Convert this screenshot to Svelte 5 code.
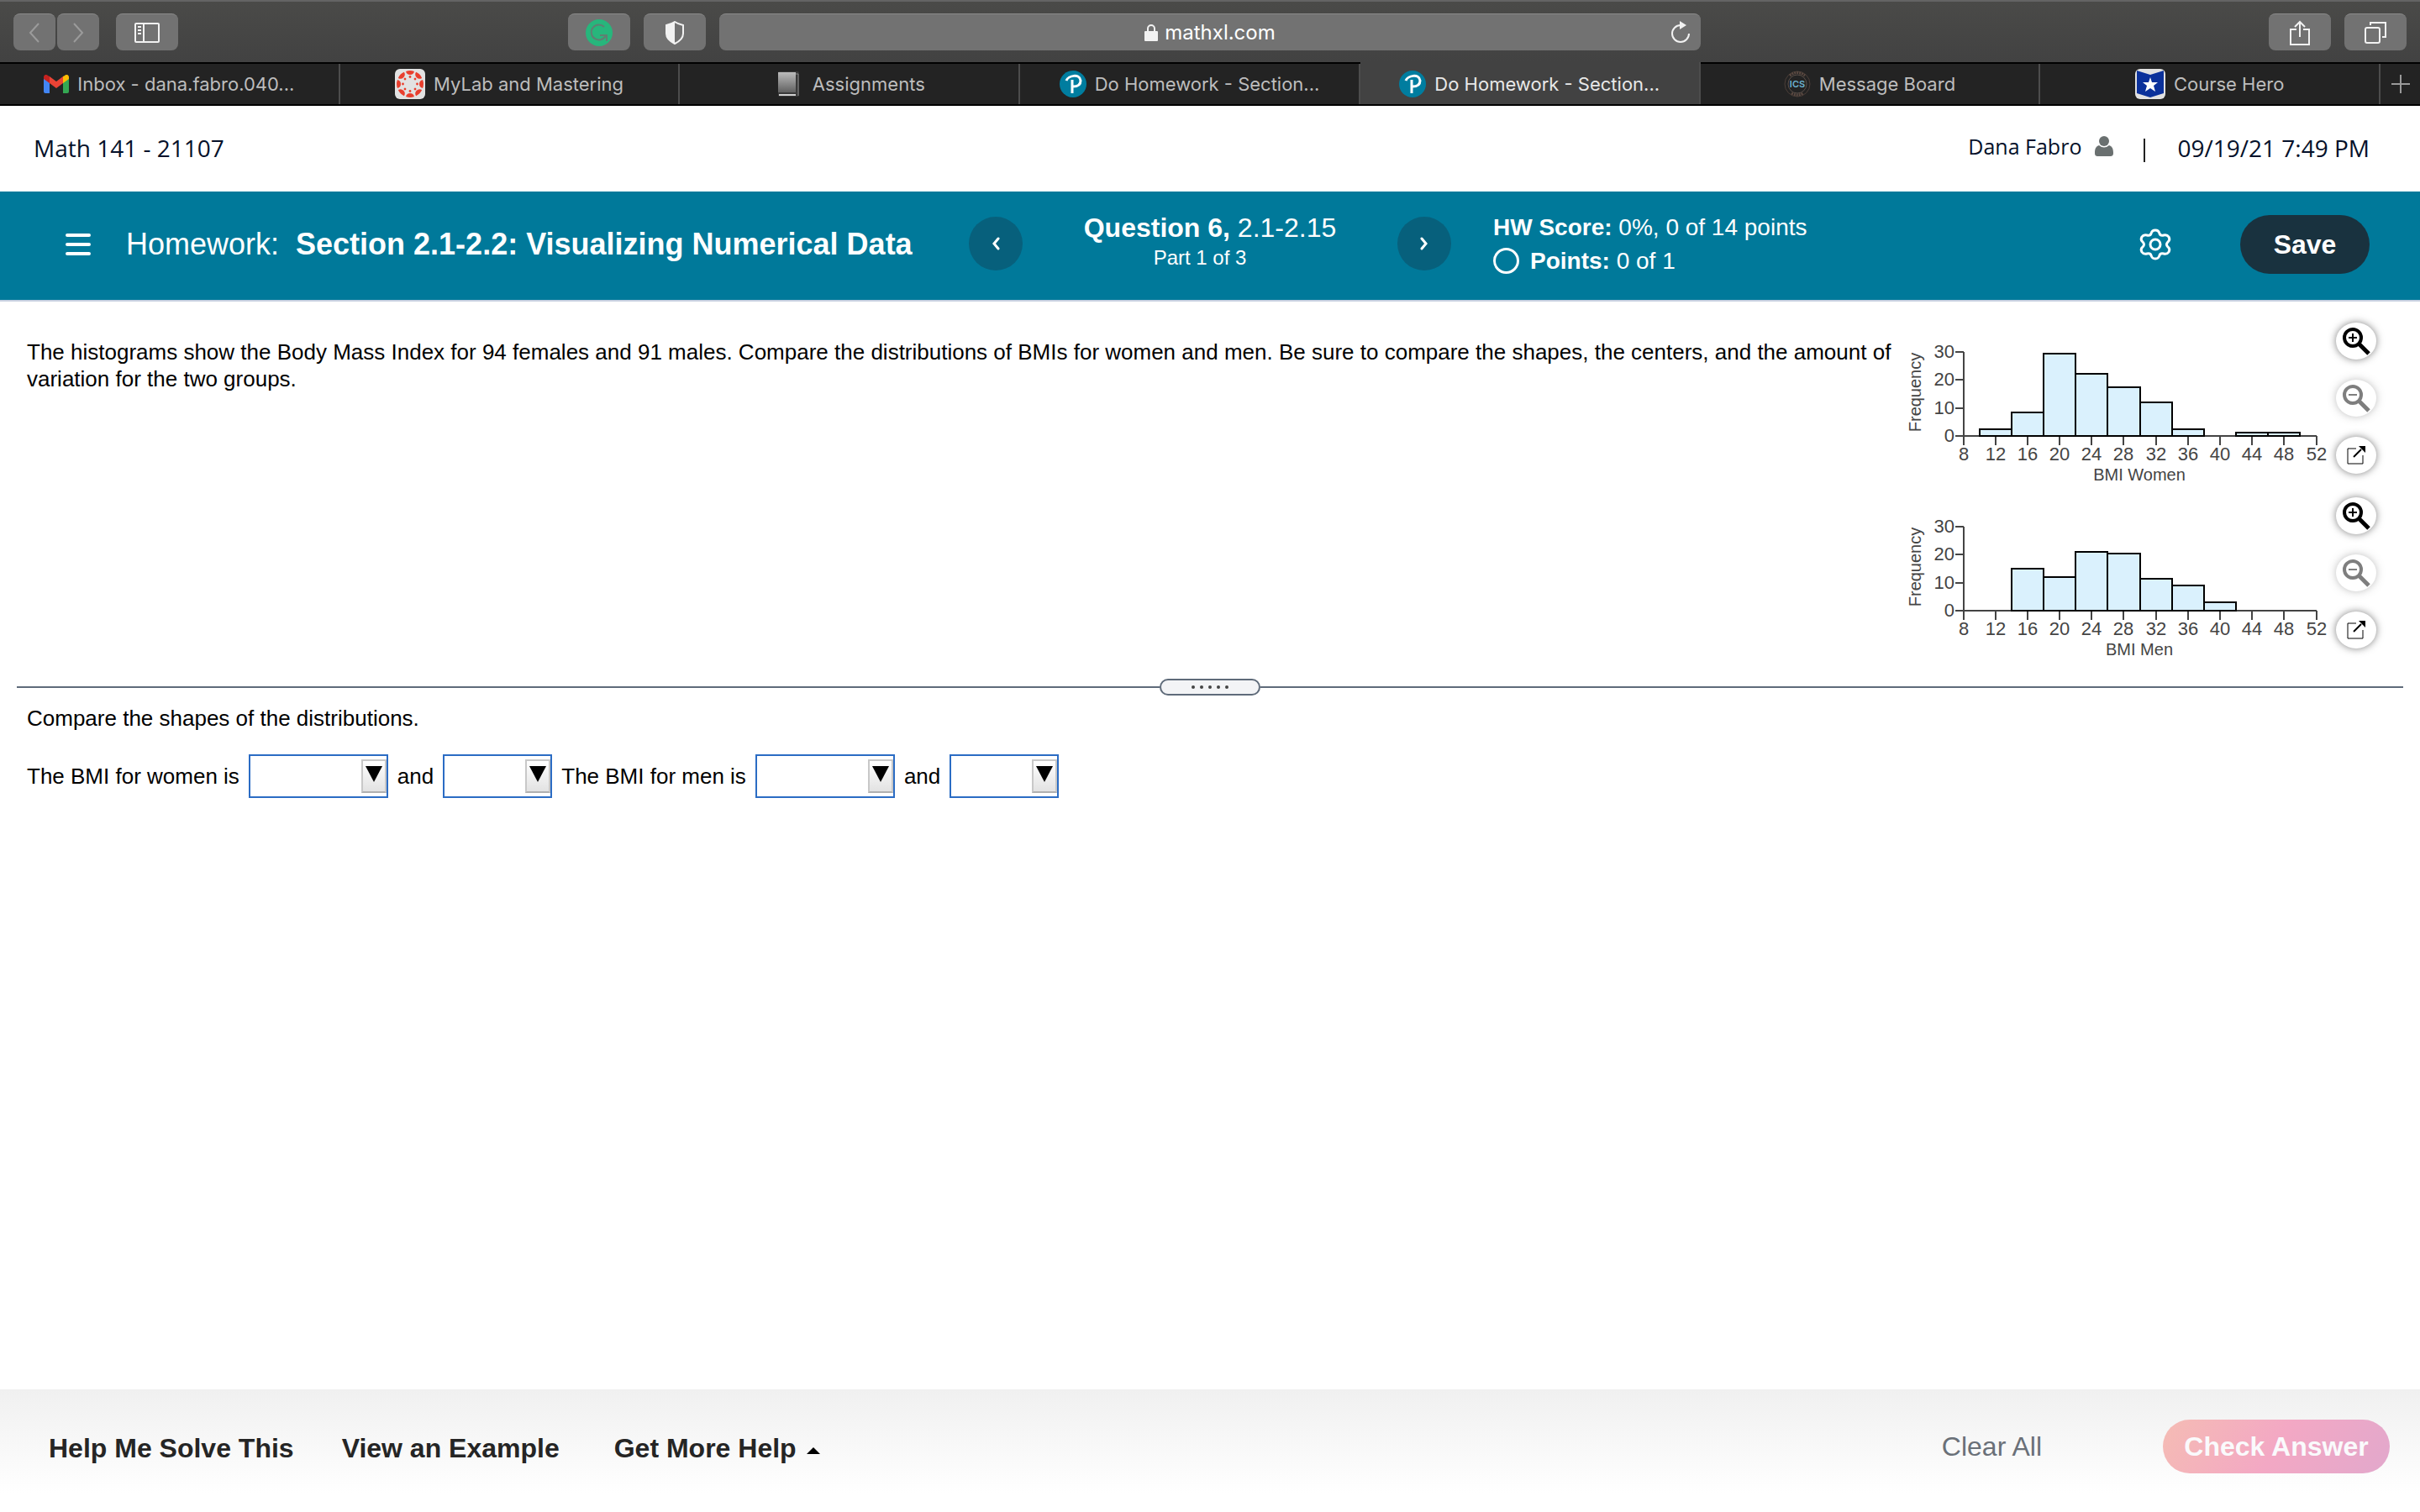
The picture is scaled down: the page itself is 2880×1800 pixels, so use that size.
<script>
  const tabs = [
    { icon: "gmail", title: "Inbox - dana.fabro.040..." },
    { icon: "canvas", title: "MyLab and Mastering" },
    { icon: "book", title: "Assignments" },
    { icon: "pearson", title: "Do Homework - Section..." },
    { icon: "pearson", title: "Do Homework - Section...", active: true },
    { icon: "ics", title: "Message Board" },
    { icon: "hero", title: "Course Hero" },
  ];

  // each bar is 4 BMI units wide
  const charts = [
    {
      label: "BMI Women",
      start: 10,
      bars: [2.4, 8.4, 29.4, 22.2, 17.4, 12, 2.4, 0, 1.2, 1.2],
    },
    {
      label: "BMI Men",
      start: 14,
      bars: [15, 12, 21, 20.4, 11.4, 9, 3],
    },
  ];

  const xTicks = [8, 12, 16, 20, 24, 28, 32, 36, 40, 44, 48, 52];
  const yTicks = [0, 10, 20, 30];

  const toX = (bmi) => Math.floor(71 + ((bmi - 8) * 420) / 44);
  const toY = (freq) => Math.round(119 - (freq * 10) / 3);

  const spokes = [0, 45, 90, 135, 180, 225, 270, 315];

  const shapes = ["", "skewed right", "skewed left", "symmetric"];
  const modes = ["", "unimodal", "bimodal"];

  let answers = {
    womenShape: "",
    womenMode: "",
    menShape: "",
    menMode: "",
  };

  const clearAll = () => {
    answers = { womenShape: "", womenMode: "", menShape: "", menMode: "" };
  };
</script>

<div class="window">
  <div class="toolbar">
    <div class="tools">
      <div class="history">
        <button class="tool narrow" aria-label="Back">
          <svg width="16" height="28" viewBox="0 0 16 28"><path d="M13 3 3 14l10 11" fill="none" stroke="#9b9b9b" stroke-width="2" /></svg>
        </button>
        <button class="tool narrow" aria-label="Forward">
          <svg width="16" height="28" viewBox="0 0 16 28"><path d="m3 3 10 11L3 25" fill="none" stroke="#9b9b9b" stroke-width="2" /></svg>
        </button>
      </div>
      <button class="tool" aria-label="Sidebar">
        <svg width="30" height="24" viewBox="0 0 30 24" fill="none" stroke="#f2f2f2" stroke-width="2">
          <rect x="1" y="1" width="28" height="22" rx="1" />
          <path d="M11 1v22M4 5h4M4 9h4M4 13h4" />
        </svg>
      </button>
      <button class="tool first-extension" aria-label="Grammarly">
        <svg width="32" height="32" viewBox="0 0 32 32">
          <circle cx="16" cy="16" r="16" fill="#27b67c" />
          <path d="M22 9a9 9 0 1 0 2 10M17 19h8v7" fill="none" stroke="#5f7f72" stroke-width="2" />
        </svg>
      </button>
      <button class="tool" aria-label="Privacy report">
        <svg width="24" height="28" viewBox="0 0 24 28">
          <path d="M12 1c3 2 6 3 10 4v10c0 5-4 9-10 12C6 24 2 20 2 15V5c4-1 7-2 10-4z" fill="none" stroke="#f2f2f2" stroke-width="2" />
          <path d="M12 1v26C6 24 2 20 2 15V5c4-1 7-2 10-4z" fill="#f2f2f2" />
        </svg>
      </button>
    </div>
    <div class="address">
      <span class="site">
        <svg width="16" height="22" viewBox="0 0 16 22">
          <path d="M4 10V6a4 4 0 0 1 8 0v4" fill="none" stroke="#f2f2f2" stroke-width="2" />
          <rect y="9" width="16" height="12" rx="1" fill="#f2f2f2" />
        </svg>
        mathxl.com
      </span>
      <button class="reload" aria-label="Reload">
        <svg width="24" height="28" viewBox="0 0 24 28">
          <path d="M12 5a10 10 0 1 0 10 10" fill="none" stroke="#f2f2f2" stroke-width="2" />
          <path d="M11 0v10l8-5z" fill="#f2f2f2" />
        </svg>
      </button>
    </div>
    <div class="tools end">
      <button class="tool" aria-label="Share">
        <svg width="24" height="30" viewBox="0 0 24 30" fill="none" stroke="#f2f2f2" stroke-width="2">
          <path d="M8 11H1v18h22V11h-7M12 20V2M6 8l6-6 6 6" />
        </svg>
      </button>
      <button class="tool" aria-label="Show tabs">
        <svg width="26" height="26" viewBox="0 0 26 26" fill="none" stroke="#f2f2f2" stroke-width="2">
          <rect x="1" y="7" width="17" height="18" rx="2" />
          <path d="M7 4V1h18v17h-4" />
        </svg>
      </button>
    </div>
  </div>

  <nav class="tabs">
    {#each tabs as tab}
      <a href="#tab" class="tab" class:active={tab.active}>
        {#if tab.icon === "gmail"}
          <svg width="30" height="22" viewBox="0 0 30 22">
            <path d="M0 3v17q0 2 2 2h5V8z" fill="#4285f4" />
            <path d="M30 3v17q0 2-2 2h-5V8z" fill="#34a853" />
            <path d="M7 2v8l8 6 8-6V2l-8 6z" fill="#ea4335" />
            <path d="M0 3c0-3 3-4 5-2l2 1v8L0 5z" fill="#c5221f" />
            <path d="M30 3c0-3-3-4-5-2l-2 1v8l7-5z" fill="#fbbc04" />
          </svg>
        {:else if tab.icon === "canvas"}
          <svg width="36" height="36" viewBox="0 0 36 36">
            <rect width="36" height="36" rx="6" fill="#e2e2e2" />
            {#each spokes as angle}
              <g transform="rotate({angle} 18 18)" fill="#e93e2d">
                <path d="M13 3q5-2 10 0-1 4-5 4t-5-4z" />
                <circle cx="18" cy="9.5" r="1.4" />
              </g>
            {/each}
          </svg>
        {:else if tab.icon === "book"}
          <svg width="36" height="32" viewBox="-4 0 36 32">
            <defs>
              <linearGradient id="cover" x2="0" y2="1">
                <stop offset="0" stop-color="#bcbcbc" />
                <stop offset="1" stop-color="#606060" />
              </linearGradient>
            </defs>
            <rect x="1" y="1" width="25" height="30" rx="2" fill="#3a3a3a" />
            <rect x="1" y="2" width="21" height="24" fill="url(#cover)" />
            <path d="M2 29h20" stroke="#d0d0d0" stroke-width="2" />
            <path d="M22 4h3v26" fill="none" stroke="#8a8a8a" />
          </svg>
        {:else if tab.icon === "pearson"}
          <svg width="32" height="32" viewBox="0 0 32 32">
            <circle cx="16" cy="16" r="16" fill="#007d9f" />
            <path d="M8 12c2-6 16-9 17 0 0 6-5 7-9 7M15 11v16" fill="none" stroke="#fff" stroke-width="3" />
          </svg>
        {:else if tab.icon === "ics"}
          <svg width="32" height="32" viewBox="0 0 32 32">
            <circle cx="16" cy="16" r="15" fill="none" stroke="#4c3f39" />
            <path d="M7 6q9-7 18 0M9 27q7 4 14 0" fill="none" stroke="#5c4a42" stroke-width="3" stroke-dasharray="2 1" />
            <circle cx="16" cy="16" r="11" fill="none" stroke="#5a4f49" />
            <text x="16" y="20" text-anchor="middle" fill="#6db3d1">ICS</text>
          </svg>
        {:else}
          <svg width="36" height="36" viewBox="0 0 36 36">
            <rect width="36" height="36" rx="6" fill="#e2e2e2" />
            <path d="M2 2l16 5 16-5v27l-16 5-16-5z" fill="#0b319b" />
            <path d="m18 10 2 6h7l-5 4 2 7-6-4-6 4 2-7-5-4h7z" fill="#fff" />
          </svg>
        {/if}
        <span>{tab.title}</span>
      </a>
    {/each}
    <button class="new-tab" aria-label="New tab">
      <svg width="22" height="22" viewBox="0 0 22 22"><path d="M11 0v22M0 11h22" stroke="#9a9a9a" stroke-width="2" /></svg>
    </button>
  </nav>

  <header class="course">
    <span class="course-name">Math 141 - 21107</span>
    <span class="user">
      Dana Fabro
      <svg width="22" height="24" viewBox="0 0 22 24" fill="#6a7070">
        <circle cx="11" cy="6" r="6" />
        <path d="M0 20c0-6 2-8 5-9q6 5 12 0c3 1 5 3 5 9 0 3-1 4-4 4H4c-3 0-4-1-4-4z" />
      </svg>
    </span>
    <span class="rule"></span>
    <span class="date">09/19/21 7:49 PM</span>
  </header>

  <section class="banner">
    <div class="assignment">
      <button class="menu" aria-label="Menu">
        <svg width="30" height="26" viewBox="0 0 30 26"><path d="M2 2h26M2 13h26M2 24h26" stroke="#fff" stroke-width="4" stroke-linecap="round" /></svg>
      </button>
      <h1><span>Homework:</span> Section 2.1-2.2: Visualizing Numerical Data</h1>
    </div>
    <div class="pager">
      <button class="step" aria-label="Previous question">
        <svg width="10" height="16" viewBox="0 0 10 16"><path d="M8 2 3 8l5 6" fill="none" stroke="#fff" stroke-width="3" stroke-linecap="round" /></svg>
      </button>
      <div class="question">
        <p><strong>Question 6,</strong> 2.1-2.15</p>
        <p class="part">Part 1 of 3</p>
      </div>
      <button class="step" aria-label="Next question">
        <svg width="10" height="16" viewBox="0 0 10 16"><path d="m2 2 5 6-5 6" fill="none" stroke="#fff" stroke-width="3" stroke-linecap="round" /></svg>
      </button>
    </div>
    <div class="status">
      <div class="score">
        <p><strong>HW Score:</strong> 0%, 0 of 14 points</p>
        <p class="points"><span class="ring"></span><span><strong>Points:</strong> 0 of 1</span></p>
      </div>
      <button class="gear" aria-label="Settings">
        <svg width="38" height="38" viewBox="0 0 38 38" fill="none" stroke="#fff" stroke-width="3" stroke-linejoin="round">
          <path d="M14 6q1-4 5-4t5 4q1 3 5 2 4-1 6 2 2 4-1 6-3 3 0 6 3 2 1 6-2 3-6 2-4-1-5 2-1 4-5 4t-5-4q-1-3-5-2-4 1-6-2-2-4 1-6 3-3 0-6-3-2-1-6 2-3 6-2 4 1 5-2z" />
          <circle cx="19" cy="19" r="6" />
        </svg>
      </button>
      <button class="save">Save</button>
    </div>
  </section>

  <main>
    <section class="problem">
      <p>
        The histograms show the Body Mass Index for 94 females and 91 males. Compare the distributions of BMIs for women
        and men. Be sure to compare the shapes, the centers, and the amount of variation for the two groups.
      </p>
      <div class="charts">
        {#each charts as chart}
          <div class="chart">
            <svg class="plot" width="510" height="190" viewBox="0 0 510 190" role="img" aria-label="{chart.label} histogram">
              <g class="axis">
                <path d="M71 19V119H491" />
                {#each yTicks as tick}
                  <path d="M61 {toY(tick)}H71" />
                {/each}
                {#each xTicks as tick}
                  <path d="M{toX(tick)} 119V130" />
                {/each}
              </g>
              {#each chart.bars as value, i}
                {#if value}
                  <rect
                    class="bar"
                    x={toX(chart.start + i * 4)}
                    y={toY(value)}
                    width={toX(chart.start + i * 4 + 4) - toX(chart.start + i * 4)}
                    height={119 - toY(value)}
                  />
                {/if}
              {/each}
              {#each yTicks as tick}
                <text class="tick" x="60" y={toY(tick) + 7} text-anchor="end">{tick}</text>
              {/each}
              {#each xTicks as tick}
                <text class="tick" x={toX(tick)} y="148" text-anchor="middle">{tick}</text>
              {/each}
              <text x="280" y="172" text-anchor="middle">{chart.label}</text>
              <text transform="translate(20 67) rotate(-90)" text-anchor="middle">Frequency</text>
            </svg>
            <div class="zoom">
              <button aria-label="Zoom in">
                <svg width="34" height="34" viewBox="0 0 34 34" fill="none" stroke="#000">
                  <circle cx="13" cy="13" r="10" stroke-width="4" />
                  <path d="M8 13h10M13 8v10" stroke-width="2" />
                  <path d="m21 21 11 11" stroke-width="5" />
                </svg>
              </button>
              <button aria-label="Zoom out" disabled>
                <svg width="34" height="34" viewBox="0 0 34 34" fill="none" stroke="#000">
                  <circle cx="13" cy="13" r="10" stroke-width="4" />
                  <path d="M8 13h10" stroke-width="2" />
                  <path d="m21 21 11 11" stroke-width="5" />
                </svg>
              </button>
              <button aria-label="Open in a new window">
                <svg width="24" height="24" viewBox="0 0 24 24" fill="none" stroke="#000">
                  <path d="M12 4H2v18h18V12" stroke-width="1" />
                  <path d="m9 14 9-9" stroke-width="2" />
                  <path d="M15 1h8v8z" fill="#000" stroke="none" />
                </svg>
              </button>
            </div>
          </div>
        {/each}
      </div>
    </section>

    <div class="divider">
      <button aria-label="Resize panels"><i></i><i></i><i></i><i></i><i></i></button>
    </div>

    <section class="answer">
      <p>Compare the shapes of the distributions.</p>
      <div class="blanks">
        <label for="women-shape">The BMI for women is</label>
        <span class="pick">
          <select id="women-shape" class="wide" bind:value={answers.womenShape}>
            {#each shapes as shape}<option value={shape}>{shape}</option>{/each}
          </select>
          <svg viewBox="0 0 20 20"><path d="M0 0h20L10 19z" /></svg>
        </span>
        <label for="women-mode">and</label>
        <span class="pick">
          <select id="women-mode" bind:value={answers.womenMode}>
            {#each modes as mode}<option value={mode}>{mode}</option>{/each}
          </select>
          <svg viewBox="0 0 20 20"><path d="M0 0h20L10 19z" /></svg>
        </span>
        <label for="men-shape">The BMI for men is</label>
        <span class="pick">
          <select id="men-shape" class="wide" bind:value={answers.menShape}>
            {#each shapes as shape}<option value={shape}>{shape}</option>{/each}
          </select>
          <svg viewBox="0 0 20 20"><path d="M0 0h20L10 19z" /></svg>
        </span>
        <label for="men-mode">and</label>
        <span class="pick">
          <select id="men-mode" bind:value={answers.menMode}>
            {#each modes as mode}<option value={mode}>{mode}</option>{/each}
          </select>
          <svg viewBox="0 0 20 20"><path d="M0 0h20L10 19z" /></svg>
        </span>
      </div>
    </section>
  </main>

  <footer>
    <button class="help">Help Me Solve This</button>
    <button class="help">View an Example</button>
    <button class="help more">
      Get More Help
      <svg width="16" height="8" viewBox="0 0 16 8"><path d="M8 0l8 8H0z" /></svg>
    </button>
    <button class="clear" on:click={clearAll}>Clear All</button>
    <button class="check">Check Answer</button>
  </footer>
</div>

<style>
  :global(body) {
    margin: 0;
  }

  .window {
    display: flex;
    flex-direction: column;
    min-height: 100vh;
    background: #fff;
    color: #000;
    font-family: "Liberation Sans", Arial, sans-serif;
    font-size: 26px;
    line-height: 32px;
  }

  .window * {
    box-sizing: border-box;
  }

  button {
    padding: 0;
    border: none;
    background: none;
    color: inherit;
    font: inherit;
    cursor: pointer;
  }

  p {
    margin: 0;
  }

  svg {
    display: block;
    flex: none;
  }

  /* Browser toolbar */
  .toolbar {
    display: grid;
    grid-template-columns: 1fr 41% 1fr;
    gap: 16px;
    height: 74px;
    padding: 14px 16px;
    border-top: 2px solid #646464;
    background: linear-gradient(#4a4a48, #424242);
    font-family: Inter, sans-serif;
  }

  .tools {
    display: flex;
    gap: 16px;
  }

  .tools.end {
    justify-content: flex-end;
  }

  .history {
    display: flex;
    gap: 2px;
    margin-right: 4px;
  }

  .tool {
    display: flex;
    align-items: center;
    justify-content: center;
    width: 74px;
    height: 44px;
    border-top: 1px solid #8a8a8a;
    border-radius: 8px;
    background: #727272;
  }

  .tool.narrow {
    width: 50px;
  }

  .first-extension {
    margin-left: auto;
  }

  .address {
    display: flex;
    align-items: center;
    height: 44px;
    padding: 0 12px;
    border-top: 1px solid #8a8a8a;
    border-radius: 8px;
    background: #727272;
    color: #fff;
    font-size: 24px;
  }

  .site {
    display: flex;
    flex: 1;
    align-items: center;
    justify-content: center;
    gap: 8px;
    padding-left: 24px;
  }

  .tabs {
    display: flex;
    height: 52px;
    border-top: 2px solid #000;
    border-bottom: 2px solid #000;
    background: #232323;
    font-family: Inter, sans-serif;
    font-size: 22px;
  }

  .tab {
    display: flex;
    flex: 1;
    align-items: center;
    justify-content: center;
    gap: 10px;
    border-right: 2px solid #4c4c4c;
    color: #bdbdbd;
    text-decoration: none;
    white-space: nowrap;
  }

  .tab.active {
    margin-top: -2px;
    padding-top: 2px;
    background: #424242;
    color: #e8e8e8;
  }

  .tab text {
    font-size: 11px;
    font-weight: 600;
  }

  .new-tab {
    display: flex;
    align-items: center;
    justify-content: center;
    width: 47px;
  }

  /* Course header */
  .course {
    display: flex;
    align-items: center;
    height: 102px;
    padding: 0 60px 2px 40px;
    color: #05112a;
    font-family: "Open Sans", sans-serif;
    font-size: 28px;
  }

  .course-name {
    margin-right: auto;
  }

  .user {
    display: flex;
    align-items: center;
    gap: 16px;
    padding-bottom: 4px;
    font-size: 25px;
  }

  .rule {
    width: 2px;
    height: 28px;
    margin: 6px 38px 0 36px;
    background: #222;
  }

  .banner {
    display: grid;
    grid-template-columns: 1fr 574px 1fr;
    height: 131px;
    border-bottom: 2px solid #c6d0e0;
    background: #00799a;
    color: #fff;
  }

  .assignment {
    display: flex;
    align-items: center;
    gap: 42px;
    padding-left: 78px;
    padding-bottom: 4px;
  }

  h1 {
    margin: 0;
    font-size: 36px;
    line-height: 44px;
    white-space: nowrap;
  }

  h1 span {
    margin-right: 10px;
    font-weight: 400;
  }

  .pager {
    display: flex;
    align-items: center;
    justify-content: space-between;
    padding-bottom: 6px;
  }

  .step {
    display: flex;
    align-items: center;
    justify-content: center;
    width: 64px;
    height: 64px;
    border-radius: 50%;
    background: #07607c;
  }

  .question {
    padding-bottom: 6px;
    font-size: 32px;
    line-height: 40px;
    text-align: center;
  }

  .question .part {
    padding-right: 24px;
    font-size: 24px;
    line-height: 32px;
  }

  .status {
    display: flex;
    align-items: center;
    padding: 0 60px 4px 50px;
  }

  .score {
    margin-right: auto;
    font-size: 28px;
    line-height: 40px;
  }

  .points {
    display: flex;
    align-items: center;
    gap: 13px;
  }

  .ring {
    width: 31px;
    height: 31px;
    border: 3px solid #fff;
    border-radius: 50%;
  }

  .gear {
    margin-right: 82px;
  }

  .save {
    width: 154px;
    height: 70px;
    border-radius: 35px;
    background: #19323f;
    font-size: 32px;
    font-weight: 700;
  }

  /* Problem panel */
  .problem {
    display: flex;
    justify-content: space-between;
    padding: 41px 52px 10px 32px;
  }

  .problem > p {
    flex: 1;
    padding-top: 3px;
  }

  .charts {
    display: flex;
    flex-direction: column;
    gap: 18px;
  }

  .chart {
    display: flex;
    gap: 4px;
  }

  .plot {
    font-size: 20px;
    fill: #444;
  }

  .tick {
    font-size: 22px;
  }

  .axis {
    fill: none;
    stroke: #444;
    stroke-width: 2;
  }

  .bar {
    fill: #daf1fd;
    stroke: #000;
    stroke-width: 2;
  }

  .zoom {
    display: flex;
    flex-direction: column;
    gap: 24px;
    margin-top: -16px;
  }

  .zoom button {
    display: flex;
    align-items: center;
    justify-content: center;
    width: 48px;
    height: 44px;
    border-radius: 50%;
    background: #fff;
    box-shadow: 0 0 10px rgba(0, 0, 0, 0.5);
  }

  .zoom button:disabled {
    opacity: 0.5;
  }

  .divider {
    display: flex;
    align-items: center;
    margin: 0 20px;
  }

  .divider::before,
  .divider::after {
    flex: 1;
    height: 2px;
    background: #5f6b7a;
    content: "";
  }

  .divider button {
    display: flex;
    align-items: center;
    justify-content: center;
    gap: 6px;
    width: 120px;
    height: 20px;
    border: 2px solid #5f6b7a;
    border-radius: 10px;
    background: #f3f4f6;
  }

  .divider i {
    width: 4px;
    height: 4px;
    border-radius: 50%;
    background: #444;
  }

  .answer {
    padding: 11px 32px;
  }

  .blanks {
    display: flex;
    align-items: center;
    gap: 11px;
    margin-top: 27px;
  }

  .pick {
    position: relative;
  }

  .pick select {
    display: block;
    width: 130px;
    height: 52px;
    padding: 0 34px 0 8px;
    border: 2px solid #2b6cc4;
    border-radius: 0;
    appearance: none;
    background: #fff;
    font: inherit;
  }

  .pick select.wide {
    width: 166px;
  }

  .pick svg {
    position: absolute;
    top: 6px;
    right: 2px;
    width: 30px;
    height: 40px;
    padding: 6px 3px 10px;
    border: 2px solid #c8c8c8;
    border-bottom-color: #b0b0b0;
    background: linear-gradient(#fff, #e2e2e2);
    pointer-events: none;
  }

  /* Bottom actions */
  footer {
    display: flex;
    align-items: center;
    height: 146px;
    margin-top: auto;
    padding: 0 36px 10px 58px;
    background: linear-gradient(#f0f0f0, #fff 85%);
    font-size: 32px;
    line-height: 40px;
  }

  .help {
    margin-right: 57px;
    padding-top: 4px;
    color: #252525;
    font-weight: 700;
  }

  .more {
    display: flex;
    align-items: center;
    gap: 12px;
    margin-left: 8px;
  }

  .more svg {
    margin-top: 6px;
    fill: #000;
  }

  .clear {
    margin-right: 144px;
    margin-left: auto;
    color: #6a7078;
  }

  .check {
    width: 270px;
    height: 64px;
    border-radius: 32px;
    background: linear-gradient(120deg, #f5bcb4, #f3a8c4 50%, #e2a8cc);
    color: #fafafc;
    font-weight: 700;
  }
</style>
